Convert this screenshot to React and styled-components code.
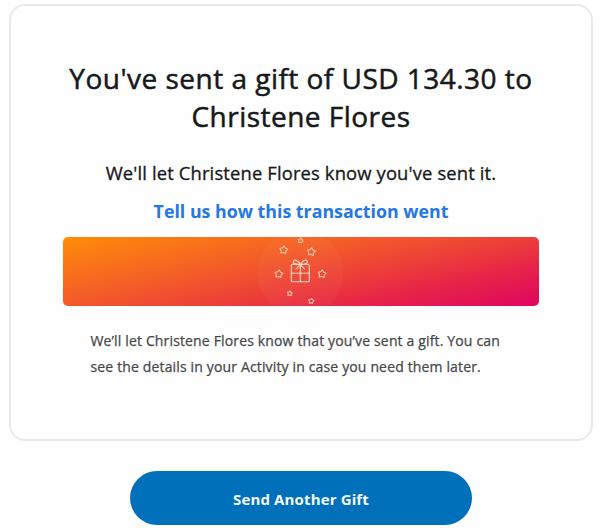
import React from 'react';
import styled, { createGlobalStyle } from 'styled-components';

const GlobalStyle = createGlobalStyle`
  *, *::before, *::after { box-sizing: border-box; }
  body {
    margin: 0;
    background: #fefefe;
    font-family: "Open Sans", "Noto Sans", sans-serif;
    color: #17181a;
    overflow: hidden;
  }
`;

const Page = styled.main`
  display: flex;
  flex-direction: column;
  align-items: center;
  width: 600px;
  height: 528px;
  padding: 4px 7px 0 9px;
`;

const Card = styled.section`
  display: flex;
  flex-direction: column;
  align-items: center;
  width: 584px;
  height: 437px;
  padding-top: 53px;
  border: 2px solid #e9e9e9;
  border-radius: 16px;
  background: #fefefe;
`;

const Title = styled.h1`
  margin: 0;
  width: 480px;
  font-size: 28px;
  font-weight: 400;
  line-height: 38px;
  letter-spacing: 0.48px;
  text-align: center;
  -webkit-text-stroke: 0.5px currentColor;
`;

const Subtitle = styled.p`
  margin: 24px 0 0;
  font-size: 18.4px;
  line-height: 28px;
  letter-spacing: 0.14px;
  white-space: nowrap;
  -webkit-text-stroke: 0.3px currentColor;
`;

const FeedbackLink = styled.a`
  margin-top: 10px;
  font-size: 17.8px;
  font-weight: 700;
  line-height: 28px;
  white-space: nowrap;
  color: #2477e4;
  text-decoration: none;
`;

const Banner = styled.div`
  display: flex;
  justify-content: center;
  width: 476px;
  height: 69px;
  margin-top: 12px;
  border-radius: 5px;
  overflow: hidden;
  background: linear-gradient(168deg, #ff8d08 0%, #f3592a 40%, #ec3d39 60%, #e72547 75%, #df0560 100%);
`;

const Details = styled.p`
  width: 421px;
  margin: 22px 0 0;
  font-size: 14px;
  line-height: 25.5px;
  letter-spacing: 0.15px;
  white-space: nowrap;
  color: #46474a;
  -webkit-text-stroke: 0.25px currentColor;
`;

const PrimaryButton = styled.button`
  width: 342px;
  height: 54px;
  margin-top: 30px;
  padding: 1px 0 0;
  border: 0;
  border-radius: 27px;
  background: #0070ba;
  color: #f4faff;
  font: 700 15px/24px "Open Sans", "Noto Sans", sans-serif;
  letter-spacing: 0.14px;
`;

const STARS = [
  { x: 59.5, y: 3.6, r: 2.6 },
  { x: 42.7, y: 13, r: 4.1 },
  { x: 70.3, y: 14.8, r: 4.1 },
  { x: 37.8, y: 37, r: 4.1 },
  { x: 81, y: 37, r: 4.1 },
  { x: 48.7, y: 56.4, r: 2.6 },
  { x: 70.2, y: 64.1, r: 2.8 },
];

const starPoints = ({ x, y, r }) =>
  Array.from({ length: 10 }, (_, i) => {
    const radius = i % 2 ? r * 0.62 : r;
    const angle = (i * Math.PI) / 5 - Math.PI / 2 + 0.12;
    return `${(x + radius * Math.cos(angle)).toFixed(2)},${(y + radius * Math.sin(angle)).toFixed(2)}`;
  }).join(' ');

const GiftArt = () => (
  <svg width="120" height="69" viewBox="0 0 120 69" fill="none" aria-hidden="true">
    <circle cx="59.5" cy="36" r="43" fill="#fff" fillOpacity="0.03" />
    <g stroke="#ffd9bd" strokeOpacity="0.85" strokeWidth="1.1" strokeLinejoin="round">
      {STARS.map((star) => (
        <polygon key={`${star.x}-${star.y}`} points={starPoints(star)} />
      ))}
    </g>
    <g stroke="#ffdccb" strokeWidth="1.1" strokeLinejoin="round" strokeLinecap="round">
      <rect x="50.3" y="27.3" width="18" height="17.5" rx="1.3" />
      <path d="M50.3 36.3h18M59.3 28v16.8" />
      <path d="M59.3 27.6C57.8 23.7 54.2 22.2 52.6 23.8C51.2 25.4 53 27.5 59.3 27.6C65.6 27.5 67.4 25.4 66 23.8C64.4 22.2 60.8 23.7 59.3 27.6M59.3 27.8l-4.2 4M59.3 27.8l4.2 4" />
    </g>
  </svg>
);

export default function App() {
  return (
    <>
      <GlobalStyle />
      <Page>
        <Card>
          <Title>
            You've sent a gift of USD 134.30 to
            <br />
            Christene Flores
          </Title>
          <Subtitle>We'll let Christene Flores know you've sent it.</Subtitle>
          <FeedbackLink href="#">Tell us how this transaction went</FeedbackLink>
          <Banner>
            <GiftArt />
          </Banner>
          <Details>
            We’ll let Christene Flores know that you’ve sent a gift. You can
            <br />
            see the details in your Activity in case you need them later.
          </Details>
        </Card>
        <PrimaryButton type="button">Send Another Gift</PrimaryButton>
      </Page>
    </>
  );
}
